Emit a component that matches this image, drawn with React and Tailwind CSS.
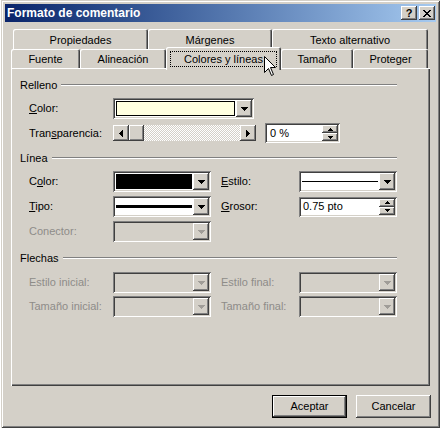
import React from "react";

const raised =
  "shadow-[inset_-1px_-1px_#404040,inset_1px_1px_#ffffff,inset_-2px_-2px_#808080,inset_2px_2px_#d4d0c8]";
const sunken =
  "shadow-[inset_1px_1px_#808080,inset_-1px_-1px_#ffffff,inset_2px_2px_#404040,inset_-2px_-2px_#d4d0c8]";

function DownArrow({ color = "#000" }) {
  return (
    <svg width="7" height="4" shapeRendering="crispEdges">
      <path fill={color} d="M0 0h7v1H0z M1 1h5v1H1z M2 2h3v1H2z M3 3h1v1H3z" />
    </svg>
  );
}
function SmallUp() {
  return (
    <svg width="5" height="3" shapeRendering="crispEdges">
      <path d="M2 0h1v1H2z M1 1h3v1H1z M0 2h5v1H0z" />
    </svg>
  );
}
function SmallDown() {
  return (
    <svg width="5" height="3" shapeRendering="crispEdges">
      <path d="M0 0h5v1H0z M1 1h3v1H1z M2 2h1v1H2z" />
    </svg>
  );
}
function LeftArrow() {
  return (
    <svg width="4" height="7" shapeRendering="crispEdges">
      <path d="M3 0h1v7H3z M2 1h1v5H2z M1 2h1v3H1z M0 3h1v1H0z" />
    </svg>
  );
}
function RightArrow() {
  return (
    <svg width="4" height="7" shapeRendering="crispEdges">
      <path d="M0 0h1v7H0z M1 1h1v5H1z M2 2h1v3H2z M3 3h1v1H3z" />
    </svg>
  );
}

function DropBtn({ disabled }) {
  return (
    <div className={`w-[16px] h-full shrink-0 bg-[#d4d0c8] flex items-center justify-center ${raised}`}>
      <DownArrow color={disabled ? "#a09d98" : "#000"} />
    </div>
  );
}

function Combo({ w, disabled, children }) {
  return (
    <div
      className={`${w} h-[21px] shrink-0 p-[2px] flex ${sunken} ${
        disabled ? "bg-[#d4d0c8]" : "bg-white"
      }`}
    >
      <div className="flex-1 min-w-0 h-full flex items-center">{children}</div>
      <DropBtn disabled={disabled} />
    </div>
  );
}

function Spin({ w, text, pl }) {
  return (
    <div className={`${w} h-[20px] shrink-0 p-[2px] flex bg-white ${sunken}`}>
      <div className={`flex-1 flex items-center ${pl}`}>{text}</div>
      <div className="w-[16px] flex flex-col">
        <div className={`h-[8px] bg-[#d4d0c8] flex items-center justify-center ${raised}`}>
          <SmallUp />
        </div>
        <div className={`flex-1 bg-[#d4d0c8] flex items-center justify-center ${raised}`}>
          <SmallDown />
        </div>
      </div>
    </div>
  );
}

function Header({ children, mt }) {
  return (
    <div className={`flex items-center h-[14px] ${mt}`}>
      <span>{children}</span>
      <div className="flex-1 ml-[4px] h-[2px] border-y border-t-[#808080] border-b-white" />
    </div>
  );
}

const tabBase =
  "h-full bg-[#d4d0c8] rounded-t-[2px] flex items-center justify-center shadow-[inset_1px_1px_#ffffff,inset_-1px_0_#404040,inset_-2px_0_#808080]";

export default function App() {
  return (
    <div className="w-[443px] h-[432px] bg-white relative overflow-hidden font-['Liberation_Sans',Arial,sans-serif] text-[11px] text-black leading-[13px]">
      <div className="ml-[1px] w-[439px] h-[428px] bg-[#d4d0c8] p-[4px] flex flex-col shadow-[inset_1px_1px_#d4d0c8,inset_-1px_-1px_#404040,inset_2px_2px_#ffffff,inset_-2px_-2px_#808080]">
        {/* Title bar */}
        <div className="h-[18px] shrink-0 flex items-center pl-[2px] pr-[1px] bg-gradient-to-r from-[#0a246a] to-[#a6caf0]">
          <span className="flex-1 text-white font-bold text-[12px] leading-[14px]">Formato de comentario</span>
          <div className="flex gap-[2px]">
            <div className={`w-[16px] h-[14px] bg-[#d4d0c8] flex items-center justify-center font-bold text-[11px] leading-none ${raised}`}>
              ?
            </div>
            <div className={`w-[16px] h-[14px] bg-[#d4d0c8] flex items-center justify-center ${raised}`}>
              <svg width="8" height="7" shapeRendering="crispEdges">
                <path d="M0 0h2v1H0z M6 0h2v1H6z M1 1h2v1H1z M5 1h2v1H5z M2 2h4v1H2z M3 3h2v1H3z M2 4h4v1H2z M1 5h2v1H1z M5 5h2v1H5z M0 6h2v1H0z M6 6h2v1H6z" />
              </svg>
            </div>
          </div>
        </div>

        {/* Body */}
        <div className="flex flex-col pl-[6px] pt-[7px]">
          {/* Tab row 1 */}
          <div className="flex ml-[2px] h-[20px]">
            <div className={`w-[135px] pt-[2px] ${tabBase}`}>Propiedades</div>
            <div className={`w-[124px] pt-[2px] ${tabBase}`}>Márgenes</div>
            <div className={`w-[156px] pt-[2px] ${tabBase}`}>Texto alternativo</div>
          </div>
          {/* Tab row 2 */}
          <div className="flex h-[19px] items-end relative z-10">
            <div className={`w-[69px] pt-[2px] ${tabBase}`}>Fuente</div>
            <div className={`w-[86px] pt-[2px] ${tabBase}`}>Alineación</div>
            <div className="w-[115px] h-[23px] -mb-[2px] px-[4px] pt-[4px] bg-[#d4d0c8] rounded-t-[2px] shadow-[inset_1px_1px_#ffffff,inset_-1px_0_#404040,inset_-2px_0_#808080]">
              <div className="h-[16px] border border-dotted border-black flex items-center justify-center">
                Colores y líneas
              </div>
            </div>
            <div className={`w-[72px] pt-[2px] ${tabBase}`}>Tamaño</div>
            <div className={`w-[75px] pt-[2px] ${tabBase}`}>Proteger</div>
          </div>

          {/* Panel */}
          <div className="w-[419px] h-[318px] flex flex-col pl-[9px] pr-[33px] pt-[10px] shadow-[inset_1px_1px_#ffffff,inset_-1px_-1px_#404040,inset_-2px_-2px_#808080]">
            <Header mt="">Relleno</Header>
            <div className="flex items-center ml-[9px] mt-[6px] h-[21px]">
              <span className="w-[84px] shrink-0">
                <span className="underline underline-offset-[1px]">C</span>olor:
              </span>
              <Combo w="w-[141px]">
                <div className="w-full h-full p-[1px]">
                  <div className="w-full h-full border border-black bg-[#ffffe1]" />
                </div>
              </Combo>
            </div>
            <div className="flex items-center ml-[9px] mt-[4px] h-[20px]">
              <span className="w-[84px] shrink-0">
                Tran<span className="underline underline-offset-[1px]">s</span>parencia:
              </span>
              <div className="w-[143px] h-[16px] shrink-0 flex">
                <div className={`w-[16px] bg-[#d4d0c8] flex items-center justify-center ${raised}`}>
                  <LeftArrow />
                </div>
                <div className={`w-[15px] bg-[#d4d0c8] ${raised}`} />
                <div className="flex-1 bg-[repeating-conic-gradient(#ffffff_0%_25%,#d4d0c8_0%_50%)] bg-[length:2px_2px]" />
                <div className={`w-[16px] bg-[#d4d0c8] flex items-center justify-center ${raised}`}>
                  <RightArrow />
                </div>
              </div>
              <div className="ml-[9px]">
                <Spin w="w-[75px]" text="0 %" pl="pl-[3px]" />
              </div>
            </div>

            <Header mt="mt-[8px]">Línea</Header>
            <div className="flex items-center ml-[9px] mt-[6px] h-[21px]">
              <span className="w-[84px] shrink-0">
                C<span className="underline underline-offset-[1px]">o</span>lor:
              </span>
              <Combo w="w-[98px]">
                <div className="w-full h-full p-[1px]">
                  <div className="w-full h-full border border-black bg-black" />
                </div>
              </Combo>
              <span className="ml-[10px] w-[78px] shrink-0">
                <span className="underline underline-offset-[1px]">E</span>stilo:
              </span>
              <Combo w="w-[98px]">
                <div className="w-full px-[1px]">
                  <div className="h-[1px] bg-black" />
                </div>
              </Combo>
            </div>
            <div className="flex items-center ml-[9px] mt-[4px] h-[21px]">
              <span className="w-[84px] shrink-0">
                <span className="underline underline-offset-[1px]">T</span>ipo:
              </span>
              <Combo w="w-[98px]">
                <div className="w-full px-[1px]">
                  <div className="h-[3px] bg-black" />
                </div>
              </Combo>
              <span className="ml-[10px] w-[78px] shrink-0">
                <span className="underline underline-offset-[1px]">G</span>rosor:
              </span>
              <Spin w="w-[98px]" text="0.75 pto" pl="pl-[2px]" />
            </div>
            <div className="flex items-center ml-[9px] mt-[4px] h-[21px] text-[#8e8c88]">
              <span className="w-[84px] shrink-0">Conector:</span>
              <Combo w="w-[98px]" disabled />
            </div>

            <Header mt="mt-[9px]">Flechas</Header>
            <div className="flex items-center ml-[9px] mt-[7px] h-[21px] text-[#8e8c88]">
              <span className="w-[84px] shrink-0">Estilo inicial:</span>
              <Combo w="w-[98px]" disabled />
              <span className="ml-[10px] w-[78px] shrink-0">Estilo final:</span>
              <Combo w="w-[98px]" disabled />
            </div>
            <div className="flex items-center ml-[9px] mt-[3px] h-[21px] text-[#8e8c88]">
              <span className="w-[84px] shrink-0">Tamaño inicial:</span>
              <Combo w="w-[98px]" disabled />
              <span className="ml-[10px] w-[78px] shrink-0">Tamaño final:</span>
              <Combo w="w-[98px]" disabled />
            </div>
          </div>

          {/* Buttons */}
          <div className="flex justify-end gap-[9px] mt-[9px] pr-[5px]">
            <div className="w-[75px] h-[23px] border border-black">
              <div className={`w-full h-full bg-[#d4d0c8] flex items-center justify-center ${raised}`}>
                Aceptar
              </div>
            </div>
            <div className={`w-[75px] h-[23px] bg-[#d4d0c8] flex items-center justify-center ${raised}`}>
              Cancelar
            </div>
          </div>
        </div>
      </div>

      {/* Mouse cursor */}
      <svg className="absolute left-[264px] top-[56px] z-20" width="13" height="21">
        <path
          d="M0.5 0.5 V16.5 L4.5 12.5 L7.5 19.5 L9.5 18.5 L6.5 11.5 H11.5 Z"
          fill="#fff"
          stroke="#000"
          strokeWidth="1"
        />
      </svg>
    </div>
  );
}
